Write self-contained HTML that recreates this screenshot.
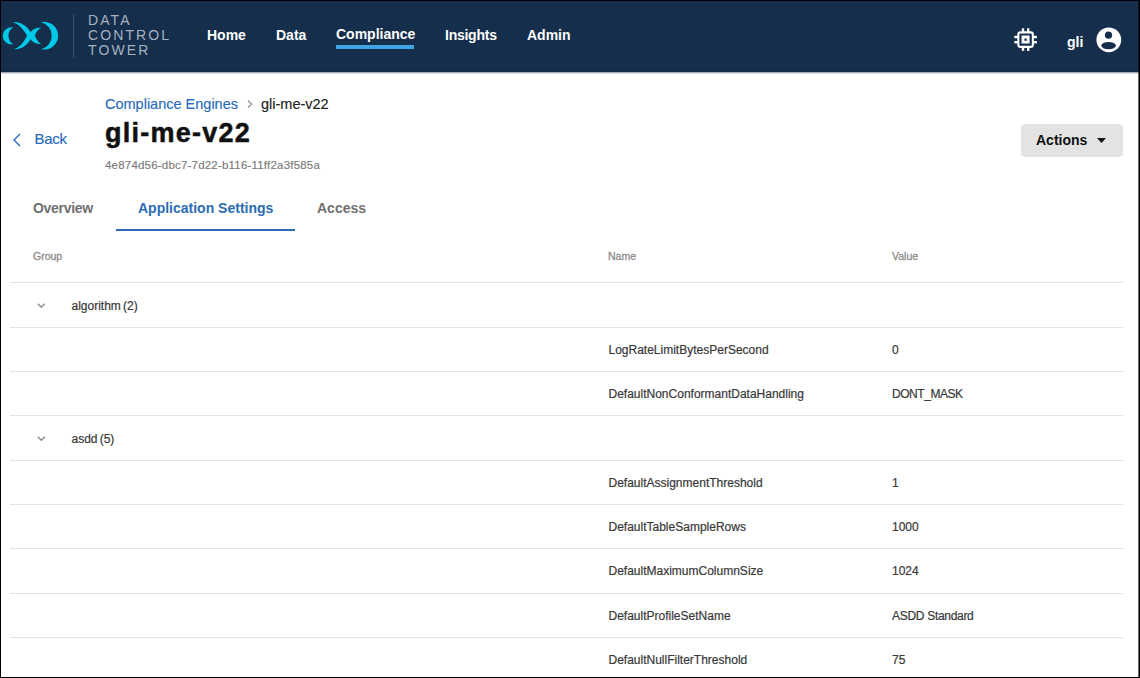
<!DOCTYPE html>
<html><head><meta charset="utf-8">
<style>
*{margin:0;padding:0;box-sizing:border-box}
html,body{width:1140px;height:678px;overflow:hidden;background:#fff}
body{position:relative;font-family:"Liberation Sans",sans-serif;color:#222}
.abs{position:absolute;white-space:nowrap}
#frame{position:absolute;left:0;top:0;width:1140px;height:678px;border-top:1px solid #000;border-left:1px solid #000;border-right:1px solid #000;border-bottom:1px solid #000;pointer-events:none;z-index:10}
#hdr{position:absolute;left:0;top:0;width:1140px;height:72px;background:#142e4c;border-bottom:1px solid #10284a;box-shadow:0 1px 1.5px rgba(20,40,70,0.55)}
.brand{color:#a6b2c1;font-size:14px;letter-spacing:2.1px;line-height:15px}
.nav{color:#fff;font-weight:bold;font-size:14px;line-height:16px;margin-top:-1px}
.blue{color:#2a6bb8;-webkit-text-stroke:0.15px #2a6bb8}
.th{color:#8c8c8c;font-size:10.5px;font-weight:normal;-webkit-text-stroke:0.3px #8c8c8c}
.rowline{position:absolute;left:10px;width:1113px;height:1px;background:#e3e3e3}
.cell{position:absolute;font-size:12px;color:#383838;white-space:nowrap;-webkit-text-stroke:0.2px #383838}
</style></head>
<body>
<div id="hdr">
  <svg class="abs" style="left:0;top:0" width="70" height="72" viewBox="0 0 70 72">
    <g fill="#00c9e8">
      <path d="M13.2 27.6 A8.47 8.47 0 1 0 13.2 44.1 A9.5 9.5 0 0 1 13.2 27.6Z"/>
      <path d="M12.8 22.1 C19.8 21.2 27 25.8 30.6 32 C32.8 29.2 36.5 27.2 41.1 27.8 C37.8 29.3 35.8 33.4 34.8 35.4 C35.8 37.5 37.8 42.2 41.1 43.8 C36.5 44.6 32.5 42.4 30.6 39.3 C27 45.5 21 50 13.8 49 C19 48 24.2 42 27 35.4 C24 30.5 19 24.2 12.8 22.1Z"/>
      <path d="M41 22.2 A13.9 13.9 0 1 1 41.3 49.3 A13.96 13.96 0 0 0 41 22.2Z"/>
    </g>
  </svg>
  <div class="abs" style="left:73px;top:14px;width:1px;height:44px;background:#3a526f"></div>
  <div class="abs brand" style="left:88px;top:13px">DATA</div>
  <div class="abs brand" style="left:88px;top:28px">CONTROL</div>
  <div class="abs brand" style="left:88px;top:43px">TOWER</div>
  <div class="abs nav" style="left:207px;top:28px">Home</div>
  <div class="abs nav" style="left:276px;top:28px">Data</div>
  <div class="abs nav" style="left:336px;top:27px">Compliance</div>
  <div class="abs" style="left:336px;top:45px;width:78px;height:3.5px;background:#3ea4e6"></div>
  <div class="abs nav" style="left:445px;top:28px;letter-spacing:-0.25px">Insights</div>
  <div class="abs nav" style="left:527px;top:28px">Admin</div>
  <svg class="abs" style="left:1009.7px;top:24.1px" width="31.2" height="31.2" viewBox="0 0 24 24"><g fill="#fff">
    <rect x="6.42" y="6.42" width="11.16" height="11.16" rx="1.7" fill="none" stroke="#fff" stroke-width="1.6"/>
    <path fill-rule="evenodd" d="M8.9 8.9H15.1V15.1H8.9Z M11.1 11.1V12.9H12.9V11.1Z"/>
    <rect x="9.08" y="3.3" width="1.85" height="3"/><rect x="13.08" y="3.3" width="1.85" height="3"/>
    <rect x="9.08" y="17.7" width="1.85" height="3"/><rect x="13.08" y="17.7" width="1.85" height="3"/>
    <rect x="3.3" y="9.08" width="3" height="1.85"/><rect x="3.3" y="13.08" width="3" height="1.85"/>
    <rect x="17.7" y="9.08" width="3" height="1.85"/><rect x="17.7" y="13.08" width="3" height="1.85"/>
  </g></svg>
  <div class="abs nav" style="left:1067px;top:35px">gli</div>
  <svg class="abs" style="left:1096px;top:26.5px" width="26" height="26" viewBox="0 0 26 26">
    <circle cx="12.8" cy="12.8" r="12.4" fill="#fff"/>
    <circle cx="12.5" cy="8.2" r="3.6" fill="#142e4c"/>
    <ellipse cx="12.6" cy="18.6" rx="7.3" ry="3.6" fill="#142e4c"/>
  </svg>
</div>

<div class="abs blue" style="left:105px;top:95.5px;font-size:14.5px">Compliance Engines</div>
<svg class="abs" style="left:246px;top:99px" width="8" height="10" viewBox="0 0 8 10"><path d="M2 1.6 L5.6 5.1 L2 8.6" fill="none" stroke="#959595" stroke-width="1.35"/></svg>
<div class="abs" style="left:261px;top:95.7px;font-size:14.5px;color:#222;-webkit-text-stroke:0.15px #222">gli-me-v22</div>

<svg class="abs" style="left:12px;top:133px" width="10" height="14" viewBox="0 0 10 14"><path d="M8 1 L2 7 L8 13" fill="none" stroke="#2b6cb5" stroke-width="1.4"/></svg>
<div class="abs blue" style="left:34.5px;top:130px;font-size:15px;letter-spacing:-0.3px">Back</div>

<div class="abs" style="left:105px;top:118px;font-size:27px;font-weight:bold;color:#111;letter-spacing:1.25px;-webkit-text-stroke:0.5px #111">gli-me-v22</div>
<div class="abs" style="left:105px;top:159px;font-size:11.5px;color:#7a7a7a;letter-spacing:0.2px;-webkit-text-stroke:0.15px #7a7a7a">4e874d56-dbc7-7d22-b116-11ff2a3f585a</div>

<div class="abs" style="left:1021px;top:124px;width:102px;height:33px;background:#e3e3e3;border-radius:4px"></div>
<div class="abs" style="left:1036px;top:132px;font-size:14px;font-weight:bold;color:#111">Actions</div>
<svg class="abs" style="left:1097px;top:138px" width="9" height="5" viewBox="0 0 9 5"><path d="M0 0H9L4.5 5Z" fill="#111"/></svg>

<div class="abs" style="left:33px;top:200px;font-size:14px;font-weight:bold;color:#707070;letter-spacing:-0.3px">Overview</div>
<div class="abs" style="left:138px;top:200px;font-size:14px;font-weight:bold;color:#2b6cb5">Application Settings</div>
<div class="abs" style="left:317px;top:200px;font-size:14px;font-weight:bold;color:#707070">Access</div>
<div class="abs" style="left:116px;top:229px;width:179px;height:2px;background:#2b6cb5"></div>

<div class="abs th" style="left:33px;top:250px">Group</div>
<div class="abs th" style="left:608px;top:250px">Name</div>
<div class="abs th" style="left:892px;top:250px">Value</div>

<div class="rowline" style="top:282px"></div>
<div class="rowline" style="top:326.8px"></div>
<div class="rowline" style="top:371.1px"></div>
<div class="rowline" style="top:415.4px"></div>
<div class="rowline" style="top:459.7px"></div>
<div class="rowline" style="top:504px"></div>
<div class="rowline" style="top:548.3px"></div>
<div class="rowline" style="top:592.6px"></div>
<div class="rowline" style="top:636.9px"></div>

<svg class="abs" style="left:36.5px;top:302.7px" width="9" height="6" viewBox="0 0 9 6"><path d="M0.8 0.8 L4.3 4.3 L7.8 0.8" fill="none" stroke="#8f8f8f" stroke-width="1.5"/></svg>
<div class="cell" style="left:71.5px;top:299px;word-spacing:-1.2px">algorithm (2)</div>
<div class="cell" style="left:608.5px;top:343px">LogRateLimitBytesPerSecond</div>
<div class="cell" style="left:892px;top:343px">0</div>
<div class="cell" style="left:608.5px;top:387px">DefaultNonConformantDataHandling</div>
<div class="cell" style="left:892px;top:387px;letter-spacing:-0.45px">DONT_MASK</div>
<svg class="abs" style="left:36.5px;top:435.5px" width="9" height="6" viewBox="0 0 9 6"><path d="M0.8 0.8 L4.3 4.3 L7.8 0.8" fill="none" stroke="#8f8f8f" stroke-width="1.5"/></svg>
<div class="cell" style="left:71.5px;top:432px;word-spacing:-1.2px">asdd (5)</div>
<div class="cell" style="left:608.5px;top:476px">DefaultAssignmentThreshold</div>
<div class="cell" style="left:892px;top:476px">1</div>
<div class="cell" style="left:608.5px;top:520px">DefaultTableSampleRows</div>
<div class="cell" style="left:892px;top:520px">1000</div>
<div class="cell" style="left:608.5px;top:564px">DefaultMaximumColumnSize</div>
<div class="cell" style="left:892px;top:564px">1024</div>
<div class="cell" style="left:608.5px;top:609px">DefaultProfileSetName</div>
<div class="cell" style="left:892px;top:609px;letter-spacing:-0.3px">ASDD Standard</div>
<div class="cell" style="left:608.5px;top:653px">DefaultNullFilterThreshold</div>
<div class="cell" style="left:892px;top:653px">75</div>

<div class="abs" style="left:1138px;top:0;width:1px;height:678px;background:rgba(0,0,0,0.58);z-index:11"></div>
<div id="frame"></div>
</body></html>
